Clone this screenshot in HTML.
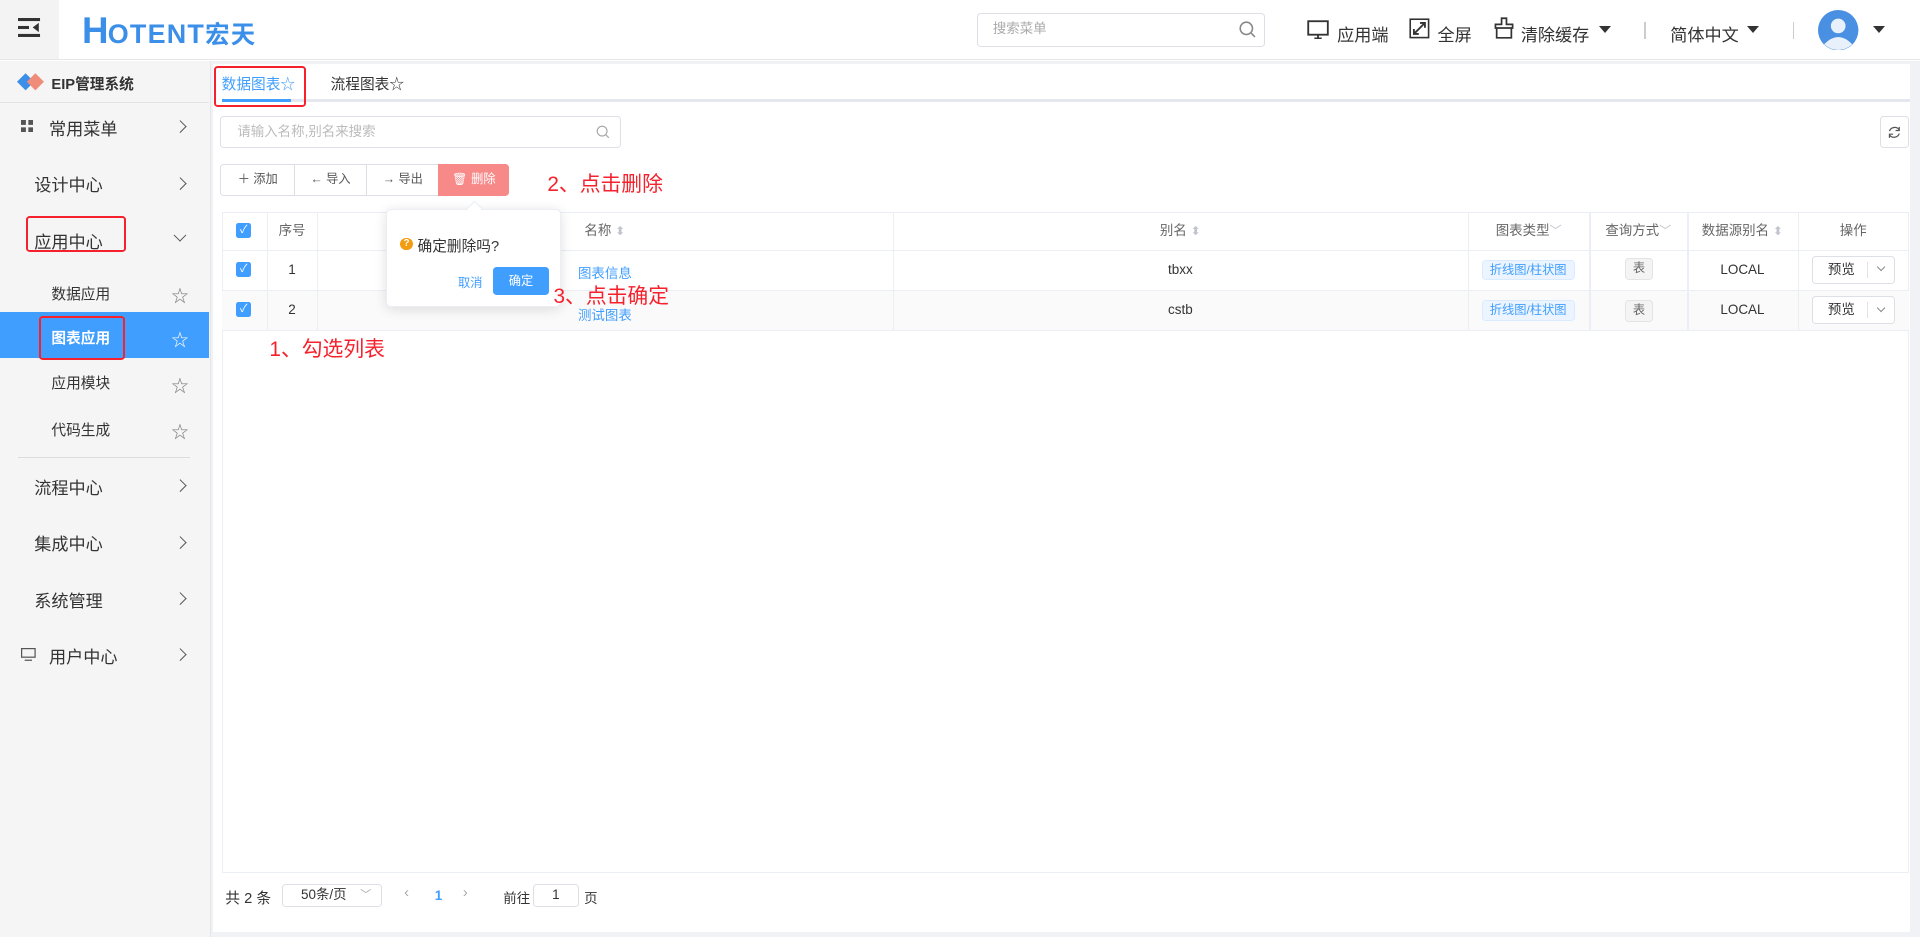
<!DOCTYPE html>
<html><head><meta charset="utf-8"><style>
*{box-sizing:border-box;margin:0;padding:0}
html,body{width:1920px;height:937px;overflow:hidden;background:#fff}
#r{zoom:1.22449;width:1568px;height:765px;position:relative;font-family:"Liberation Sans","Noto Sans CJK SC",sans-serif;font-size:13px;color:#333}
.a{position:absolute}
.red{color:#f5222d;font-size:17px}
.box{border:2px solid #f5222d;border-radius:3px}
.side div.it{position:absolute;left:28px;font-size:14px;color:#333}
.chev{position:absolute;left:144px;width:7px;height:7px;border-right:1.3px solid #555;border-top:1.3px solid #555;transform:rotate(45deg)}
.star{position:absolute;left:140px;font-size:14px;color:#777}
.th{position:absolute;top:173px;height:31px;line-height:31px;font-size:11px;color:#666;text-align:center}
.td{position:absolute;font-size:11px;text-align:center}
.vl{position:absolute;top:173px;height:97px;width:1px;background:#ebeef5}
.cb{position:absolute;left:193px;width:12px;height:12px;background:#409eff;border-radius:2px;color:#fff;font-size:9px;line-height:12px;text-align:center}
.tag{position:absolute;left:1210px;width:76px;height:17px;border:1px solid #d9ecff;background:#ecf5ff;color:#409eff;font-size:10px;line-height:15px;text-align:center;border-radius:3px}
.tg2{position:absolute;left:1327px;width:23px;height:18px;border:1px solid #e4e4e4;background:#f4f4f5;color:#666;font-size:10px;line-height:16px;text-align:center;border-radius:3px}
.pv{position:absolute;left:1480px;width:68px;height:23px;border:1px solid #dcdfe6;border-radius:3px;font-size:11px;line-height:21px;background:#fff}
.pv i{position:absolute;left:53px;top:6px;width:5px;height:5px;border-right:1px solid #888;border-bottom:1px solid #888;transform:rotate(45deg)}
.btn{position:absolute;top:134px;height:26px;border:1px solid #dcdfe6;font-size:10px;line-height:24px;text-align:center;color:#555;background:#fff}
.srt{color:#c0c4cc;font-size:10px}
</style></head><body><div id="r">
<div class="a" style="left:0;top:0;width:1568px;height:49px;background:#fff;border-bottom:1px solid #e6e6e6"></div>
<div class="a" style="left:0;top:0;width:48px;height:48px;background:#f3f3f3"></div>
<svg class="a" style="left:15px;top:15px" width="20" height="16"><rect x="0" y="0" width="18" height="2.5" fill="#333"/><rect x="0" y="6.5" width="9" height="2.5" fill="#333"/><rect x="0" y="13" width="18" height="2.5" fill="#333"/><path d="M17 4 L12 7.7 L17 11.5Z" fill="#333"/></svg>
<div class="a" style="left:67px;top:8px;font-size:30px;font-weight:bold;color:#3b8fe8;letter-spacing:-1px">H</div>
<div class="a" style="left:88px;top:13px;font-size:22px;color:#3b8fe8;font-weight:bold;letter-spacing:1px">OTENT<span style="font-size:20px">宏天</span></div>
<div class="a" style="left:798px;top:11px;width:235px;height:27px;border:1px solid #dcdfe6;border-radius:3px;font-size:11px;color:#aaa;line-height:25px;padding-left:12px">搜索菜单</div>
<svg class="a" style="left:1012px;top:17px" width="14" height="14"><circle cx="6" cy="6" r="5" fill="none" stroke="#888" stroke-width="1.3"/><path d="M10 10 L13 13" stroke="#888" stroke-width="1.3"/></svg>
<svg class="a" style="left:1067px;top:16px" width="18" height="16"><rect x="1" y="1" width="16" height="11" fill="none" stroke="#333" stroke-width="1.5"/><path d="M6 15 H12 M9 12 V15" stroke="#333" stroke-width="1.5"/></svg>
<div class="a" style="left:1092px;top:17px;font-size:14px">应用端</div>
<svg class="a" style="left:1151px;top:15px" width="17" height="17"><rect x="1" y="1" width="15" height="15" fill="none" stroke="#333" stroke-width="1.3"/><path d="M4 13 L13 4 M9 4 H13 V8 M4 9 V13 H8" fill="none" stroke="#333" stroke-width="1.5"/></svg>
<div class="a" style="left:1174px;top:17px;font-size:14px">全屏</div>
<svg class="a" style="left:1219px;top:14px" width="18" height="18"><path d="M7 1 H11 V6 H16 V9 H2 V6 H7Z M3 9 V17 H15 V9" fill="none" stroke="#333" stroke-width="1.4"/></svg>
<div class="a" style="left:1242px;top:17px;font-size:14px">清除缓存</div>
<div class="a" style="left:1306px;top:21px;border:5px solid transparent;border-top:6px solid #333"></div>
<div class="a" style="left:1343px;top:18px;width:1px;height:14px;background:#ccc"></div>
<div class="a" style="left:1364px;top:17px;font-size:14px">简体中文</div>
<div class="a" style="left:1427px;top:21px;border:5px solid transparent;border-top:6px solid #333"></div>
<div class="a" style="left:1464px;top:18px;width:1px;height:14px;background:#ccc"></div>
<svg class="a" style="left:1485px;top:8px" width="33" height="33"><circle cx="16.5" cy="16.5" r="16.5" fill="#4a90e2"/><circle cx="16.5" cy="13" r="6" fill="#e8f0fb"/><path d="M5 28 Q16.5 16 28 28 A16.5 16.5 0 0 1 5 28Z" fill="#e8f0fb"/></svg>
<div class="a" style="left:1530px;top:21px;border:5px solid transparent;border-top:6px solid #333"></div>
<div class="a side" style="left:0;top:50px;width:172px;height:715px;background:#f5f5f5;border-right:1px solid #e6e6e6">
<svg class="a" style="left:14px;top:9px" width="22" height="16"><path d="M0 8 L7 1 L14 8 L7 15Z" fill="#3b8fe8"/><path d="M8 8 L15 1 L22 8 L15 15Z" fill="#f08c7a"/></svg>
<div class="a" style="left:42px;top:10px;font-size:12px;font-weight:bold">EIP管理系统</div>
<div class="a" style="left:0;top:33px;width:171px;height:1px;background:#e3e3e3"></div>
<svg class="a" style="left:17px;top:48px" width="10" height="10"><rect width="4" height="4" fill="#555"/><rect x="6" width="4" height="4" fill="#555"/><rect y="6" width="4" height="4" fill="#555"/><rect x="6" y="6" width="4" height="4" fill="#555"/></svg>
<div class="it" style="left:40px;top:44px">常用菜单</div><div class="chev" style="top:50px"></div>
<div class="it" style="top:90px">设计中心</div><div class="chev" style="top:96px"></div>
<div class="it" style="top:136px">应用中心</div><div class="chev" style="top:139px;transform:rotate(135deg)"></div>
<div class="a box" style="left:21px;top:126px;width:82px;height:30px"></div>
<div class="it" style="left:42px;top:181px;font-size:12px">数据应用</div><div class="star" style="top:180px">☆</div>
<div class="a" style="left:0;top:205px;width:171px;height:37px;background:#409eff"></div>
<div class="it" style="left:42px;top:217px;font-size:12px;color:#fff;font-weight:bold">图表应用</div><div class="star" style="top:216px;color:#fff">☆</div>
<div class="a box" style="left:32px;top:208px;width:70px;height:36px"></div>
<div class="it" style="left:42px;top:254px;font-size:12px">应用模块</div><div class="star" style="top:254px">☆</div>
<div class="it" style="left:42px;top:292px;font-size:12px">代码生成</div><div class="star" style="top:291px">☆</div>
<div class="a" style="left:15px;top:323px;width:140px;height:1px;background:#ddd"></div>
<div class="it" style="top:337px">流程中心</div><div class="chev" style="top:343px"></div>
<div class="it" style="top:383px">集成中心</div><div class="chev" style="top:389px"></div>
<div class="it" style="top:429px">系统管理</div><div class="chev" style="top:435px"></div>
<svg class="a" style="left:17px;top:479px" width="12" height="11"><rect x="0.5" y="0.5" width="11" height="7" fill="none" stroke="#555"/><path d="M3 10 H9" stroke="#555"/></svg>
<div class="it" style="left:40px;top:475px">用户中心</div><div class="chev" style="top:481px"></div>
</div>
<div class="a" style="left:172px;top:50px;width:1396px;height:715px;background:#f0f2f5"></div>
<div class="a" style="left:174px;top:52px;width:1386px;height:709px;background:#fff"></div>
<div class="a" style="left:181px;top:81px;width:1379px;height:2px;background:#e4e7ed"></div>
<div class="a" style="left:181px;top:60px;font-size:12px;color:#409eff">数据图表☆</div>
<div class="a" style="left:181px;top:81px;width:57px;height:2px;background:#409eff"></div>
<div class="a box" style="left:175px;top:54px;width:75px;height:33px"></div>
<div class="a" style="left:270px;top:60px;font-size:12px;color:#333">流程图表☆</div>
<div class="a" style="left:180px;top:95px;width:327px;height:26px;border:1px solid #dcdfe6;border-radius:3px;font-size:11px;color:#bbb;line-height:24px;padding-left:13px">请输入名称,别名来搜索</div>
<svg class="a" style="left:487px;top:102px" width="11" height="11"><circle cx="5" cy="5" r="4" fill="none" stroke="#aaa"/><path d="M8 8 L10.5 10.5" stroke="#aaa"/></svg>
<div class="a" style="left:1535px;top:95px;width:24px;height:26px;border:1px solid #dcdfe6;border-radius:3px"></div>
<svg class="a" style="left:1541px;top:102px" width="12" height="12"><path d="M10 4 A4.5 4.5 0 0 0 2 5 M2 8 A4.5 4.5 0 0 0 10 7" fill="none" stroke="#555" stroke-width="1"/><path d="M10 1.5 V4.5 H7 M2 10.5 V7.5 H5" fill="none" stroke="#555"/></svg>
<div class="btn" style="left:180px;width:61px;border-radius:3px 0 0 3px">＋ 添加</div>
<div class="btn" style="left:240px;width:60px">← 导入</div>
<div class="btn" style="left:299px;width:60px">→ 导出</div>
<div class="btn" style="left:358px;width:58px;background:#f78989;border-color:#f78989;color:#fff;border-radius:0 3px 3px 0">🗑 删除</div>
<div class="a red" style="left:447px;top:136px">2、点击删除</div>
<div class="a" style="left:181px;top:173px;width:1378px;height:540px;border:1px solid #ebeef5"></div>
<div class="a" style="left:181px;top:204px;width:1378px;height:1px;background:#ebeef5"></div>
<div class="a" style="left:181px;top:237px;width:1378px;height:33px;background:#fafafa;border-top:1px solid #ebeef5;border-bottom:1px solid #ebeef5"></div>
<div class="vl" style="left:218px"></div><div class="vl" style="left:259px"></div><div class="vl" style="left:729px"></div><div class="vl" style="left:1199px"></div><div class="vl" style="left:1298px"></div><div class="vl" style="left:1378px"></div><div class="vl" style="left:1468px"></div>
<div class="cb" style="top:182px">✓</div><div class="cb" style="top:214px">✓</div><div class="cb" style="top:247px">✓</div>
<div class="th" style="left:218px;width:41px">序号</div>
<div class="th" style="left:259px;width:470px">名称 <span class="srt">⬍</span></div>
<div class="th" style="left:729px;width:470px">别名 <span class="srt">⬍</span></div>
<div class="th" style="left:1199px;width:99px">图表类型<span class="srt">﹀</span></div>
<div class="th" style="left:1298px;width:80px">查询方式<span class="srt">﹀</span></div>
<div class="th" style="left:1378px;width:90px">数据源别名 <span class="srt">⬍</span></div>
<div class="th" style="left:1468px;width:91px">操作</div>
<div class="td" style="left:218px;width:41px;top:214px">1</div><div class="td" style="left:218px;width:41px;top:247px">2</div>
<div class="td" style="left:259px;width:470px;top:214px;color:#409eff">图表信息</div><div class="td" style="left:259px;width:470px;top:248px;color:#409eff">测试图表</div>
<div class="td" style="left:729px;width:470px;top:214px">tbxx</div><div class="td" style="left:729px;width:470px;top:247px">cstb</div>
<div class="tag" style="top:212px">折线图/柱状图</div><div class="tag" style="top:245px">折线图/柱状图</div>
<div class="tg2" style="top:211px">表</div><div class="tg2" style="top:245px">表</div>
<div class="td" style="left:1378px;width:90px;top:214px">LOCAL</div><div class="td" style="left:1378px;width:90px;top:247px">LOCAL</div>
<div class="pv" style="top:209px"><span style="position:absolute;left:12px">预览</span><span style="position:absolute;left:44px;top:4px;width:1px;height:13px;background:#e4e4e4"></span><i></i></div>
<div class="pv" style="top:242px"><span style="position:absolute;left:12px">预览</span><span style="position:absolute;left:44px;top:4px;width:1px;height:13px;background:#e4e4e4"></span><i></i></div>
<div class="a" style="left:315px;top:171px;width:143px;height:80px;background:#fff;border:1px solid #ebeef5;border-radius:4px;box-shadow:0 2px 10px rgba(0,0,0,.12)"></div>
<div class="a" style="left:383px;top:166px;width:9px;height:9px;background:#fff;transform:rotate(45deg);border-left:1px solid #ebeef5;border-top:1px solid #ebeef5"></div>
<div class="a" style="left:327px;top:194px;width:10px;height:10px;border-radius:50%;background:#f39c12;color:#fff;font-size:8px;text-align:center;line-height:10px;font-weight:bold">?</div>
<div class="a" style="left:341px;top:192px;font-size:12px">确定删除吗?</div>
<div class="a" style="left:374px;top:223px;font-size:10px;color:#409eff">取消</div>
<div class="a" style="left:403px;top:218px;width:45px;height:23px;background:#409eff;border-radius:3px;color:#fff;font-size:10px;line-height:23px;text-align:center">确定</div>
<div class="a red" style="left:452px;top:228px">3、点击确定</div>
<div class="a red" style="left:220px;top:271px">1、勾选列表</div>
<div class="a" style="left:184px;top:724px;font-size:12px">共 2 条</div>
<div class="a" style="left:230px;top:722px;width:82px;height:19px;border:1px solid #dcdfe6;border-radius:3px;font-size:11px;line-height:17px;padding-left:15px">50条/页<span style="position:absolute;right:8px;color:#aaa;font-size:9px">﹀</span></div>
<div class="a" style="left:330px;top:723px;color:#aaa;font-size:12px">‹</div>
<div class="a" style="left:355px;top:725px;color:#409eff;font-size:11px;font-weight:bold">1</div>
<div class="a" style="left:378px;top:723px;color:#aaa;font-size:12px">›</div>
<div class="a" style="left:411px;top:724px;font-size:11px">前往</div>
<div class="a" style="left:435px;top:722px;width:38px;height:19px;border:1px solid #dcdfe6;border-radius:3px;font-size:11px;line-height:17px;text-align:center">1</div>
<div class="a" style="left:477px;top:724px;font-size:11px">页</div>
</div></body></html>
